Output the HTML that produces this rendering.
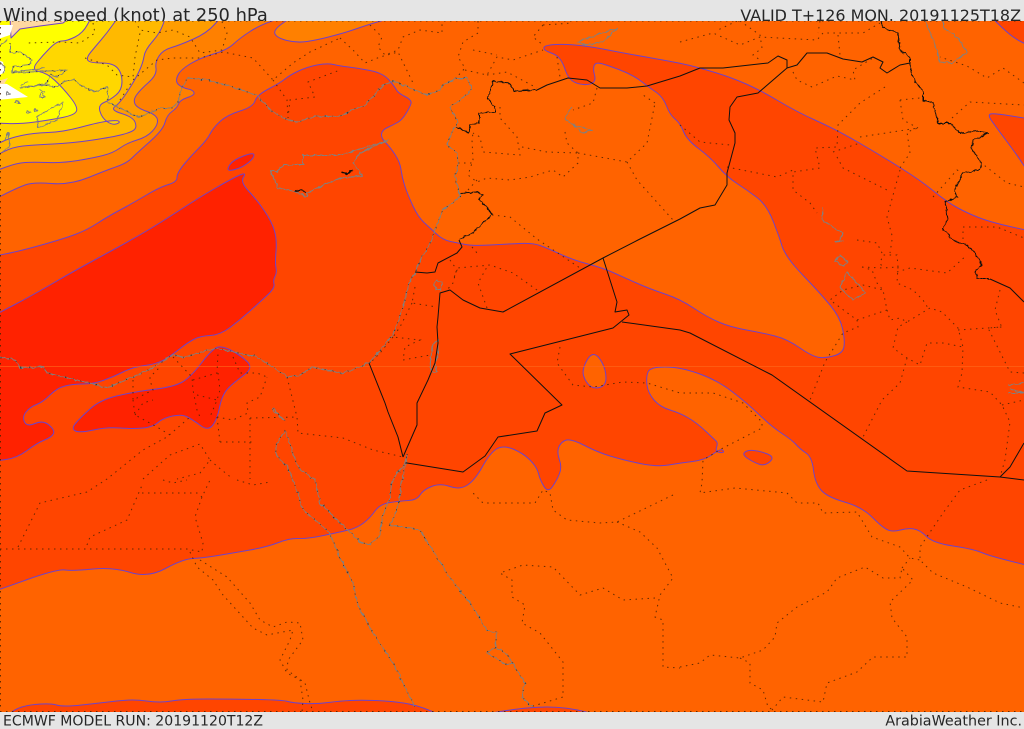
<!DOCTYPE html>
<html><head><meta charset="utf-8"><title>Wind speed</title>
<style>
html,body{margin:0;padding:0;background:#e5e5e5;width:1024px;height:729px;overflow:hidden}
svg{display:block}
text{font-family:"DejaVu Sans","Liberation Sans",sans-serif;fill:#262626}
</style></head><body>
<svg width="1024" height="729" viewBox="0 0 1024 729" xmlns="http://www.w3.org/2000/svg">
<defs>
<clipPath id="m"><rect x="0" y="21" width="1024" height="691"/></clipPath>
<filter id="w" filterUnits="userSpaceOnUse" x="0" y="0" width="1024" height="729"><feTurbulence type="fractalNoise" baseFrequency="0.22" numOctaves="2" seed="4"/><feDisplacementMap in="SourceGraphic" scale="3.5" xChannelSelector="R" yChannelSelector="G"/></filter>
</defs>
<rect width="1024" height="729" fill="#e5e5e5"/>
<text x="3" y="21" font-size="17.85">Wind speed (knot) at 250 hPa</text>
<text x="1021" y="21" font-size="15.95" text-anchor="end">VALID T+126 MON. 20191125T18Z</text>
<text x="3" y="725.5" font-size="14.07">ECMWF MODEL RUN: 20191120T12Z</text>
<text x="1022" y="725.5" font-size="14.3" text-anchor="end">ArabiaWeather Inc.</text>
<g clip-path="url(#m)">
<rect x="0" y="21" width="1024" height="691" fill="#ff6300"/>
<g stroke="#6f42c8" stroke-width="1" stroke-linejoin="round">
<path class="s" fill="#ff8000" d="M287,16L260,25L240,38L227,50L200,58L180,70L175,82L183,88L193,90L195,95L180,100L177,108L167,115L163,130L137,153L127,163L107,170L70,185L33,182L17,188L-5,199L-5,16Z"/>
<path class="s" fill="#ff8000" d="M293,16L273,30L277,38L297,43L317,40L340,34L353,30L373,23L400,16Z"/>
<path class="s" fill="#ff9d00" d="M222,16L207,33L180,45L163,50L155,62L157,75L140,90L133,100L137,108L157,115L158,125L147,137L127,143L113,153L93,158L63,163L33,162L17,163L-5,171L-5,16Z"/>
<path class="s" fill="#ffb900" d="M166,16L160,33L145,50L143,63L135,80L120,103L110,110L133,117L137,127L132,132L113,137L73,143L33,145L13,147L-5,156L-5,16Z"/>
<path class="s" fill="#ffd700" d="M119,16L107,33L95,47L86,58L90,63L113,63L122,73L122,90L110,100L98,105L102,118L112,125L120,123L118,120L100,122L63,132L33,133L10,138L-5,145L-5,16Z"/>
<path class="s" fill="#ffff00" d="M92,16L83,33L67,41L57,41L43,55L31,70L47,73L63,88L78,107L75,115L50,120L20,124L-5,123L-5,16Z"/>
<path fill="#ffd8a0" stroke="#6f42c8" d="M10,16L11,38L20,29L40,26L63,23L72,16Z"/>
</g>
<path fill="#fff" d="M-2,25L13,25L10,35L-2,39ZM-2,60L3,62L5,72L-2,76ZM-2,83L7,84L28,97L-2,100Z"/>
<path fill="#ffd8a0" d="M-2,81L8,78L4,84L-2,84Z"/>
<g stroke="#6f42c8" stroke-width="1" stroke-linejoin="round">
<path class="s" fill="#ff4500" d="M-5,256L20,251L63,239L87,230L107,217L133,203L160,187L177,182L177,173L190,157L207,140L213,128L227,115L253,107L257,95L280,83L290,75L307,67L327,63L340,66L357,68L383,73L395,87L398,93L412,100L410,107L402,120L393,125L382,130L381,138L390,147L400,162L402,177L407,193L418,217L430,228L443,240L458,243L473,246L507,244L533,243L547,248L573,260L603,268L623,277L650,289L680,299L707,317L730,327L763,333L787,339L813,357L827,358L843,353L845,340L840,317L820,293L793,265L783,250L780,239L767,205L747,190L727,177L710,157L687,140L680,123L670,115L663,97L650,88L633,75L607,65L595,62L593,70L596,80L590,85L577,84L568,78L563,63L557,55L543,50L545,45L567,44L593,47L623,53L680,63L700,68L730,77L760,90L797,112L837,130L880,155L920,180L947,202L967,213L990,222L1030,231L1030,566L990,556L973,549L933,543L920,530L908,528L893,532L883,528L862,507L827,497L815,483L812,457L800,449L792,440L772,427L747,403L717,380L680,367L650,367L646,377L648,393L660,407L680,413L697,423L715,440L718,443L715,452L725,453L721,448L705,460L680,463L657,467L623,460L597,452L570,438L560,443L557,453L562,467L557,480L548,493L540,480L537,467L523,453L503,445L490,453L475,480L460,490L440,483L423,490L417,500L400,501L380,504L370,518L357,528L340,532L307,539L290,538L267,547L233,553L203,558L183,559L148,578L113,567L73,571L57,569L-5,591Z"/>
<path class="s" fill="#ff6300" d="M590,354L582,370L585,381L593,389L606,386L606,370L598,355Z"/>
<path class="s" fill="#ff4500" d="M742,455L747,450L760,451L775,457L765,466L755,463Z"/>
<path class="s" fill="#ff4500" d="M1030,119L993,113L988,115L993,123L1017,155L1030,175Z"/>
<path class="s" fill="#ff4500" d="M990,16L1013,38L1030,46L1030,16Z"/>
<path class="s" fill="#ff4500" d="M5,717L20,706L50,703L63,707L100,703L133,699L160,703L183,699L233,699L283,700L293,703L317,704L340,701L360,700L390,701L417,705L445,717Z"/>
<path class="s" fill="#ff4500" d="M468,717L527,707L567,707L605,717Z"/>
<path class="s" fill="#ff2200" d="M-5,315L33,295L67,275L100,257L133,239L160,223L200,197L233,178L247,172L240,182L257,200L272,222L277,240L275,263L277,273L273,280L275,288L260,302L240,320L220,335L200,336L187,343L172,355L157,364L133,367L113,377L93,384L73,384L57,388L43,402L30,407L22,417L27,427L43,420L55,430L52,437L37,443L17,458L-5,461Z"/>
<path class="s" fill="#ff2200" d="M71,429L80,418L100,400L133,392L173,387L190,378L213,348L223,346L240,355L254,368L233,383L222,395L217,420L208,431L193,420L182,414L163,418L153,427L133,429L107,427L80,433Z"/>
<path class="s" fill="#ff2200" d="M227,169L233,160L254,152L254,158L243,167L230,171Z"/>
</g>
<path d="M0,366.5H1024" stroke="#ff6a1a" stroke-width="1" opacity=".6" fill="none"/>
<g fill="none" stroke="#4a2200" stroke-width="1" stroke-dasharray="1.5 4.5" opacity=".85">
<path d="M135,21L140,30L157,33L173,30L190,37L200,53L222,50L227,33L222,22M93,23L95,33L80,43L60,42L28,43M85,58L107,65L117,75L133,77L135,57L140,33M120,100L133,80L157,60L173,58L200,58L223,52L253,58L273,80L293,63L310,52L340,38M273,80L287,100L288,118L290,100L315,97L308,82L340,70M340,38L353,50L365,63L380,57L398,52L413,83M370,25L382,37L378,47L385,55L398,50L403,37L420,30L442,33L442,22M478,21L478,33L463,42L458,57L465,68L457,77M465,70L487,75L497,57L513,60L543,50M473,50L497,55M543,25L533,37L543,45M543,25L573,23M487,75L507,72L537,88M557,57L560,77M597,88L593,103L573,110M565,132L567,143L578,153L578,163L563,177L553,170L530,177L510,180L487,178L477,182L468,175L473,160L472,140L473,133M578,153L627,162L647,143L655,103M627,162L637,180L673,220M655,103L640,93M522,147L547,152L578,153M500,107L500,118L517,137L520,155L483,152L480,137L473,133M458,163L473,163M468,190L477,180M492,215L510,217L537,239L580,268M537,290L513,273L490,265L457,268L453,283L447,290M487,308L478,283L487,267M450,260L457,270L453,280M472,247L477,253M415,287L412,303L437,307M412,303L400,327L393,337L420,340L405,347L403,360L430,355M393,337L380,353L370,363"/>
<path d="M560,347L557,363L573,385L593,387L623,382L647,383L680,393L713,393L743,403L762,422L762,428L723,448L703,460L702,483L700,493L735,488L787,493L797,503L818,503L823,513L857,512L872,537L900,547L910,558L920,560M987,480L960,490L943,513L920,547L920,560L933,573L967,587L1000,603L1024,608M680,667L700,663L710,655L740,658L763,650L775,637L777,623L797,607L827,592L837,578L865,567L883,578L900,578L902,568L913,580L890,602L892,618L907,637L907,657L873,657L857,672L827,683L823,702L783,697L772,710M902,568L910,558M740,658L750,663L750,683L763,690L768,707L773,710M673,495L617,522L600,523L567,520L553,510L550,493L543,490L535,503L483,503L472,492M617,522L640,532L657,548L673,578L660,595L655,617L663,620L663,667L680,668M655,598L623,600L603,588L580,595L553,567L523,565L500,573L512,580L512,597L525,605L522,623L540,633L563,662L563,697L530,707"/>
<path d="M680,42L713,33L740,45L760,37L817,40L823,33L863,33L880,23M737,21L718,30M740,21L760,35L762,48L753,55L760,60M820,21L818,33M838,35L840,55M793,72L797,80L812,87L837,76L855,80L853,70L873,58M885,87L860,103L838,125L837,147L815,148L820,168L793,172L793,190L810,203L817,213M680,125L700,142L730,145M727,167L777,177L793,170M860,137L918,128L907,132L910,153L900,168M833,152L860,143M837,157L843,168L887,190M900,170L887,217L893,239M900,100L920,98M900,100L903,120L918,128M952,118L970,102L1024,105M933,197L957,170L963,173M980,162L1007,183L1024,187M1024,83L1003,68L987,78L967,66L940,57M963,239L963,227L997,227L1024,238M862,267L872,270L877,283L883,290L887,310L857,320L830,300L843,290L863,285L883,290M857,320L858,327L843,333L825,362L810,400M887,310L890,320L900,318L907,322L930,308L942,312L958,328L963,347L962,373L958,387L990,392L1002,405L1010,422L1005,460L1000,477M907,322L898,327L893,348L907,358L920,365L927,343L943,343L963,347M907,358L900,383L882,400L863,437M958,330L1002,327L988,328L1010,372L1024,373M1000,290L995,310L1002,328M1002,405L1024,400M862,267L883,268L880,263L883,255L897,255L898,267L883,268M857,240L877,243L883,255M892,240L890,253M898,267L897,283L913,290L923,300L928,308M897,272L910,268L947,273L967,255"/>
<path d="M0,549L187,549L202,552L203,543L195,517L202,497L210,480M18,547L40,503L87,492L107,479L143,450L167,437L190,417M87,545L90,537L127,520L143,483M143,479L170,455L200,444L210,460L200,473L177,479M142,493L197,493L202,497M163,480L173,483L187,480M210,460L218,467L233,479M237,480L253,485L270,482M250,418L250,479M250,418L297,417L298,433L343,438L373,450L403,457M220,442L252,442M217,417L220,442M217,417L233,420L248,413L247,403L260,397L267,377M287,377L297,417M133,380L133,400L153,390L150,380L150,377L160,367M133,400L135,415L157,427L170,435M135,415L143,403L153,400M173,357L192,377L193,390L197,410L200,417M193,380L217,373L218,353M218,373L220,390L217,400L210,417M197,395L217,400M233,357L240,373L257,373L267,377M190,552L197,567L213,580L223,595L243,617L253,628L267,635L293,630L290,640L280,660L287,673L300,680L303,700L302,712M200,560L227,577L250,603L260,620L273,627L287,622L300,623L303,640L288,660L287,670L305,683L310,703L313,712"/>
<path d="M0,21H1024M0,711.5H1024M0.5,21V712"/>
</g>
<g filter="url(#w)">
<g fill="none" stroke="#808080" stroke-width="1" stroke-linejoin="round">
<path id="c" d="M10,43L10,53L20,52L32,60L30,65L13,67L12,73L30,72L67,70L57,77L50,75L47,83L20,88L43,85L57,87L63,82L73,79L83,87L95,92L107,87L108,102L120,108L133,115L140,117L160,108L172,108L177,103L182,88L188,78L207,80L233,87L257,95L270,110L287,120L297,122L313,117L340,116L357,108L363,107L383,85L393,81L403,85L427,95L440,90L443,85L457,78L467,78L472,88L467,95L450,107L458,122L452,132L447,145L457,153L458,163L455,177L459,192L460,197L443,210L435,230L432,240L422,257L415,272L408,285L403,307L393,335L370,362L353,370L340,373L313,367L300,375L287,377L270,365L253,355L247,355L217,348L183,357L172,355L157,365L133,377L107,388L93,384L47,373L43,367L20,368L15,360L0,357M285,430L275,447L277,457L288,467L298,493L303,510L327,530L333,540L340,558L353,583L357,603L373,633L393,663L415,707M285,430L292,450L298,467L315,480L320,503L340,523L360,542L370,545L380,535L382,517L390,497L392,480L403,467L408,455M408,455L402,480L398,507L390,525L420,530L437,557L450,578L473,607L487,630L497,633L495,647L508,655L517,670L525,683L522,697L532,707M495,647L487,653L507,665L513,663M272,410L285,420L280,417L274,408Z"/>
</g>
<use href="#c" fill="none" stroke="#333" stroke-width="1" stroke-dasharray="1 7"/>
<path fill="none" stroke="#808080" stroke-width="1" stroke-linejoin="round" d="M303,155L340,155L383,142L388,140L360,153L353,163L363,176L340,178L308,192L307,197L297,192L278,188L270,170L277,172L283,165L303,165Z
M925,21L937,50L940,62L952,63L967,52L957,37L943,28L943,21M577,42L597,35L617,28L603,42L585,45L578,42M572,107L565,118L573,125L592,130L582,133L573,125M434,283L437,280L442,283L441,290L436,290Z
M438,340L432,347L430,367L433,373L437,372L435,363L438,353ZM823,208L822,220L843,233L840,240L835,242L843,241M835,260L840,255L848,262L843,267ZM847,272L840,287L853,300L865,293L855,280Z
M1008,385L1024,383M1008,393L1024,393L1010,389M37,117L63,102L57,120L38,128ZM13,72L45,68M20,88L50,84M40,90L45,92M7,40L0,45M5,140L8,133L10,145L3,152M20,85L28,82M42,92L45,97L39,97ZM7,91L10,94L6,95ZM16,100L20,103L15,103ZM27,110L31,112L26,113ZM35,109L38,110L34,112ZM0,62L5,68L3,74"/>
<g fill="none" stroke="#111" stroke-width="1" stroke-linejoin="round">
<path d="M881,21L883,28L898,33L900,50L910,58L910,68L915,82L923,90L923,100L933,103L938,123L950,123L960,133L977,131L989,133L973,140L972,150L982,163L980,170L963,173L955,190L957,197L945,202L948,220L942,228L953,240L967,245L975,253L982,265L975,272L978,279L990,279"/>
<path d="M459,239L473,233L475,230L492,215L487,207L478,200L483,195L477,192L460,193M456,127L469,133L470,125L479,123L479,113L495,112L495,107L488,98L493,81L510,83L514,91L537,90"/>
<path stroke-width="1.4" d="M295,191L301,190L307,193M342,172L347,174L353,170"/>
</g>
</g>
<g fill="none" stroke="#111" stroke-width="1" stroke-linejoin="round">
<path d="M537,90L547,85L568,78L587,80L600,88L627,88L647,86L680,76L700,68L723,68L768,63L778,56L787,60L787,68L797,65L807,53L827,53L843,59L862,62L873,57L883,62L880,68L887,73L900,65L910,63M990,279L1010,288L1024,302M1024,443L1010,467L1000,477"/>
<path d="M787,68L758,93L737,97L730,107L729,120L735,133L735,143L727,173L727,185L715,205L700,208L680,219L638,240L603,258L503,312L480,308L463,300L450,290L440,293L438,317L437,327L438,343L435,363L428,380L417,403L417,425L403,457"/>
<path d="M603,258L617,302L615,312L627,310L629,315L613,328L510,354L562,405L545,413L537,431L498,437L485,456L463,472L407,463M622,322L680,330L690,333L772,375L907,471L1000,477L1024,480M369,363L385,403L388,412L398,437L403,457M415,272L427,273L435,272L438,263L457,253L462,247L459,240"/>
</g>
</g>
</svg>
<script>
document.querySelectorAll('path.s').forEach(function(e){
  var n=e.getAttribute('d').match(/-?\d+(\.\d+)?/g).map(Number),p=[];
  for(var i=0;i<n.length;i+=2)p.push([n[i],n[i+1]]);
  function o(a){return a[0]<0||a[0]>1024||a[1]<21||a[1]>712}
  function m(a,b){return ((a[0]+b[0])/2)+','+((a[1]+b[1])/2)}
  var L=p.length,d='M'+m(p[L-1],p[0]);
  for(i=0;i<L;i++){var a=p[i],b=p[(i+1)%L];
    d+=o(a)?'L'+a[0]+','+a[1]+'L'+m(a,b):'Q'+a[0]+','+a[1]+' '+m(a,b);}
  e.setAttribute('d',d+'Z');
});
</script>
</body></html>
